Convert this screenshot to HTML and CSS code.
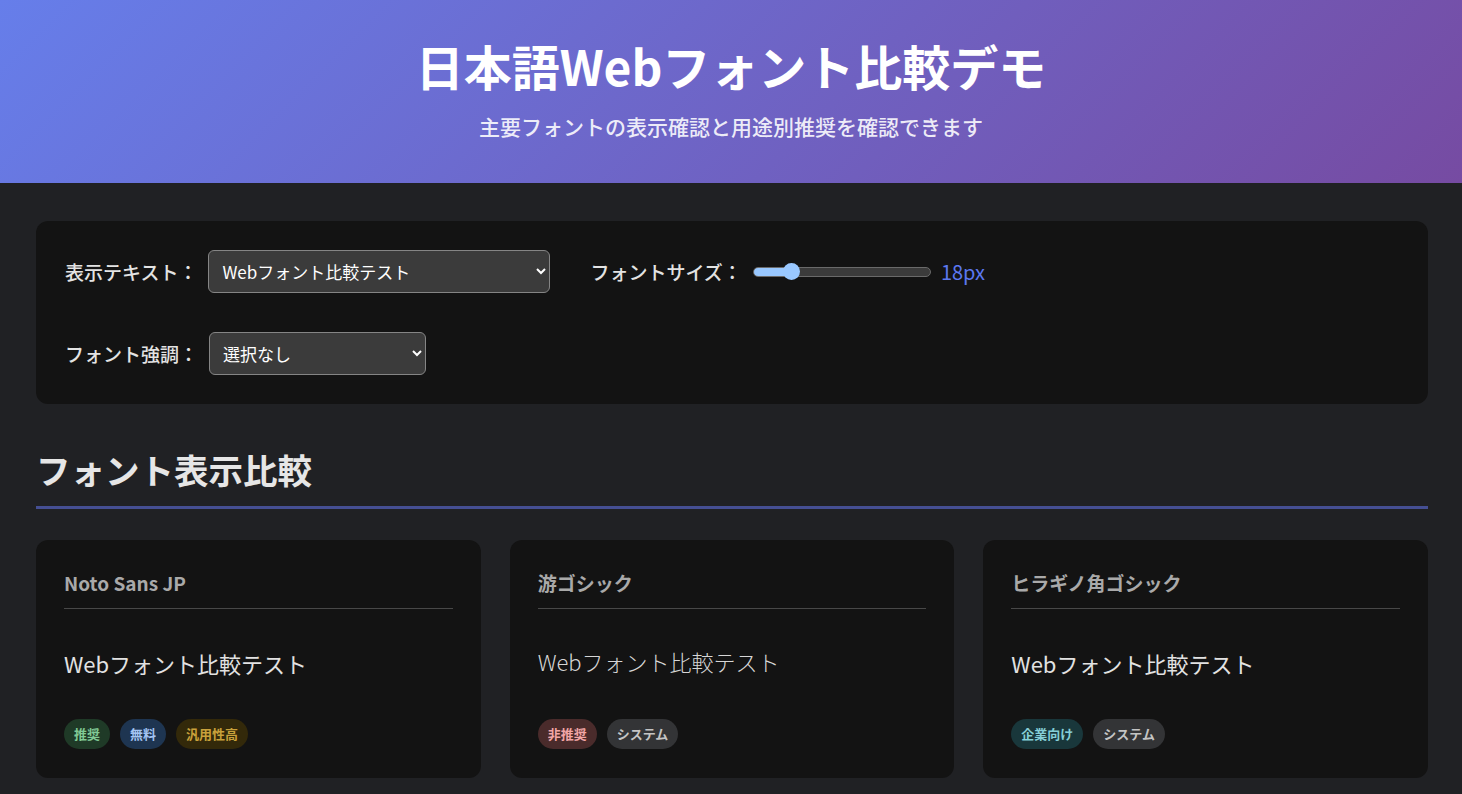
FILE: index.html
```html
<!DOCTYPE html>
<html lang="ja">
<head>
<meta charset="utf-8">
<title>日本語Webフォント比較デモ</title>
<link rel="stylesheet" href="styles.css">
</head>
<body>
<header class="hero">
  <h1 class="hero-title">日本語Webフォント比較デモ</h1>
  <p class="hero-sub">主要フォントの表示確認と用途別推奨を確認できます</p>
</header>
<main class="main">
  <section class="panel">
    <div class="panel-row">
      <div class="field">
        <label class="field-label">表示テキスト：</label>
        <select class="select select-wide">
          <option>Webフォント比較テスト</option>
        </select>
      </div>
      <div class="field">
        <label class="field-label">フォントサイズ：</label>
        <input class="range" type="range" min="12" max="45" value="18">
        <span class="range-value">18px</span>
      </div>
    </div>
    <div class="panel-row">
      <div class="field">
        <label class="field-label">フォント強調：</label>
        <select class="select select-narrow">
          <option>選択なし</option>
        </select>
      </div>
    </div>
  </section>

  <h2 class="section-title">フォント表示比較</h2>

  <section class="cards">
    <article class="card">
      <h3 class="card-name">Noto Sans JP</h3>
      <p class="card-sample">Webフォント比較テスト</p>
      <div class="tags">
        <span class="tag tag-green">推奨</span>
        <span class="tag tag-blue">無料</span>
        <span class="tag tag-yellow">汎用性高</span>
      </div>
    </article>
    <article class="card">
      <h3 class="card-name">游ゴシック</h3>
      <p class="card-sample card-sample-light">Webフォント比較テスト</p>
      <div class="tags">
        <span class="tag tag-red">非推奨</span>
        <span class="tag tag-gray">システム</span>
      </div>
    </article>
    <article class="card">
      <h3 class="card-name">ヒラギノ角ゴシック</h3>
      <p class="card-sample">Webフォント比較テスト</p>
      <div class="tags">
        <span class="tag tag-teal">企業向け</span>
        <span class="tag tag-gray">システム</span>
      </div>
    </article>
  </section>
</main>
</body>
</html>
```

FILE: styles.css
```css
:root {
  color-scheme: dark;
}
* {
  box-sizing: border-box;
}
body {
  margin: 0;
  background: #202124;
  color: #e8eaed;
  font-family: "Noto Sans CJK JP", "Noto Sans", sans-serif;
}
.hero {
  background: linear-gradient(135deg, #667eea 0%, #764ba2 100%);
  padding: 36px 20px 40px;
  text-align: center;
  color: #fff;
}
.hero-title {
  margin: 0;
  font-size: 48px;
  line-height: 58px;
  font-weight: 700;
}
.hero-sub {
  margin: 15px 0 0;
  font-size: 21px;
  line-height: 34px;
  font-weight: 500;
  color: rgba(255, 255, 255, 0.88);
}
.main {
  padding: 38px 34px 40px 36px;
}
.panel {
  background: #131313;
  border-radius: 12px;
  padding: 29px 29px;
  display: flex;
  flex-direction: column;
  gap: 39px;
}
.panel-row {
  display: flex;
  align-items: center;
  gap: 40px;
}
.field {
  display: flex;
  align-items: center;
}
.field-label {
  font-size: 19px;
  font-weight: 500;
  color: #e3e3e3;
  margin-right: 11px;
}
.select {
  height: 43px;
  background-color: #3b3b3b;
  color: #fff;
  border: 1px solid #858585;
  border-radius: 6px;
  padding: 0 10px 0 9px;
  font-size: 17px;
  font-family: "Noto Sans CJK JP", "Noto Sans", sans-serif;
}
.select-wide {
  width: 342px;
}
.select-narrow {
  width: 217px;
}
.range {
  -webkit-appearance: none;
  appearance: none;
  width: 178px;
  height: 10px;
  margin: 0 10px 0 0;
  border: 1px solid #6a6a6a;
  border-radius: 5px;
  background: linear-gradient(to right, #99c8ff 0 36px, #3b3b3b 36px 100%);
}
.range::-webkit-slider-thumb {
  -webkit-appearance: none;
  appearance: none;
  width: 17px;
  height: 17px;
  border-radius: 50%;
  background: #99c8ff;
  border: none;
}
.range-value {
  font-size: 20px;
  color: #5c78f0;
}
.section-title {
  margin: 41px 0 31px;
  font-size: 34.5px;
  line-height: 49px;
  font-weight: 700;
  color: #e6e6e6;
  padding-bottom: 12px;
  border-bottom: 3px solid #454f93;
}
.cards {
  display: grid;
  grid-template-columns: repeat(3, 1fr);
  gap: 29px;
}
.card {
  background: #131313;
  border-radius: 12px;
  padding: 29px 28px 29px;
}
.card-name {
  margin: 0;
  font-size: 19px;
  line-height: 27px;
  font-weight: 700;
  color: #a9a9a9;
  padding-bottom: 12px;
  border-bottom: 1px solid #484848;
}
.card-sample {
  margin: 38px 0 39px;
  font-size: 22px;
  line-height: 33px;
  color: #e2e2e2;
}
.card-sample-light {
  font-weight: 300;
  color: #d6d6d6;
  transform: translateY(-2px);
}
.tags {
  display: flex;
  gap: 10px;
}
.tag {
  display: inline-block;
  height: 30px;
  line-height: 30px;
  padding: 0 10px;
  border-radius: 15px;
  font-size: 13px;
  font-weight: 700;
}
.tag-green {
  background: #1f3a27;
  color: #81c995;
}
.tag-blue {
  background: #1e3551;
  color: #a3c4f3;
}
.tag-yellow {
  background: #33290a;
  color: #c9a13b;
}
.tag-red {
  background: #4a2b2b;
  color: #f2a6a6;
}
.tag-gray {
  background: #333436;
  color: #c4c4c4;
}
.tag-teal {
  background: #19373b;
  color: #86cfd8;
}
```
